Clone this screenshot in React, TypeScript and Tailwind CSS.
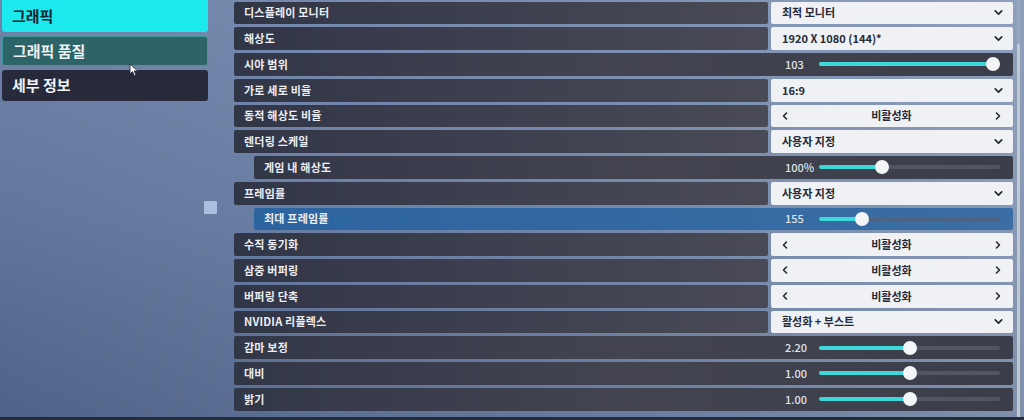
import React from 'react';
import { ChevronDown, ChevronLeft, ChevronRight } from 'lucide-react';

type Setting = {
    label: string;
    kind: 'select' | 'toggle' | 'slider';
    value: string;
    pct?: number;
    indent?: boolean;
    active?: boolean;
};

const settings: Setting[] = [
    { label: '디스플레이 모니터', kind: 'select', value: '최적 모니터' },
    { label: '해상도', kind: 'select', value: '1920 X 1080 (144)*' },
    { label: '시야 범위', kind: 'slider', value: '103', pct: 96 },
    { label: '가로 세로 비율', kind: 'select', value: '16:9' },
    { label: '동적 해상도 비율', kind: 'toggle', value: '비활성화' },
    { label: '렌더링 스케일', kind: 'select', value: '사용자 지정' },
    { label: '게임 내 해상도', kind: 'slider', value: '100%', pct: 35, indent: true },
    { label: '프레임률', kind: 'select', value: '사용자 지정' },
    { label: '최대 프레임률', kind: 'slider', value: '155', pct: 24, indent: true, active: true },
    { label: '수직 동기화', kind: 'toggle', value: '비활성화' },
    { label: '삼중 버퍼링', kind: 'toggle', value: '비활성화' },
    { label: '버퍼링 단축', kind: 'toggle', value: '비활성화' },
    { label: 'NVIDIA 리플렉스', kind: 'select', value: '활성화 + 부스트' },
    { label: '감마 보정', kind: 'slider', value: '2.20', pct: 50 },
    { label: '대비', kind: 'slider', value: '1.00', pct: 50 },
    { label: '밝기', kind: 'slider', value: '1.00', pct: 50 },
];

const font = { fontFamily: '"Noto Sans CJK KR", "Noto Sans", sans-serif' };

const SettingRow = ({ s }: { s: Setting }) => {
    const labelText = (
        <span className="text-[11px] leading-none font-bold text-[#eceef3] tracking-[0.2px]">{s.label}</span>
    );

    if (s.kind === 'slider') {
        return (
            <div
                className={`h-[22.75px] flex items-center rounded-[2px] ${s.indent ? 'ml-[20px]' : ''} ${
                    s.active
                        ? 'bg-gradient-to-r from-[#2c64a0] to-[#3a6ea4]'
                        : 'bg-gradient-to-r from-[#323748] via-[#434450] to-[#3b3d4a]'
                }`}
            >
                <div className="flex-1 flex items-center pl-[10px]">{labelText}</div>
                <div className="w-[242px] flex items-center">
                    <span className="w-[48px] pl-[14px] text-[11px] leading-none font-medium text-[#dfe3ea]">{s.value}</span>
                    <div className="relative w-[181px] h-[4px] rounded-full bg-[#5b5f6e]/70">
                        <div className="absolute left-0 top-0 h-full rounded-full bg-[#3ed8da]" style={{ width: `${s.pct}%` }} />
                        <div
                            className="absolute top-1/2 w-[14px] h-[14px] -translate-x-1/2 -translate-y-1/2 rounded-full bg-[#f4f5f7]"
                            style={{ left: `${s.pct}%` }}
                        />
                    </div>
                </div>
            </div>
        );
    }

    return (
        <div className={`h-[22.75px] flex ${s.indent ? 'ml-[20px]' : ''}`}>
            <div className="flex-1 flex items-center pl-[10px] rounded-[2px] bg-gradient-to-r from-[#313647] to-[#4a4a56]">
                {labelText}
            </div>
            <div className="w-[242px] ml-[3px] flex items-center rounded-[2px] bg-[#eff1f4] text-[#252a36]">
                {s.kind === 'select' ? (
                    <>
                        <span className="flex-1 pl-[11px] text-[11px] leading-none font-bold">{s.value}</span>
                        <ChevronDown size={13} strokeWidth={3.2} className="mr-[8px]" />
                    </>
                ) : (
                    <>
                        <ChevronLeft size={12} strokeWidth={3.2} className="ml-[8px]" />
                        <span className="flex-1 text-center text-[11px] leading-none font-bold">{s.value}</span>
                        <ChevronRight size={12} strokeWidth={3.2} className="mr-[9px]" />
                    </>
                )}
            </div>
        </div>
    );
};

const App = () => {
    return (
        <div
            className="relative w-[1024px] h-[420px] overflow-hidden flex bg-gradient-to-b from-[#7185a9] via-[#62779c] to-[#4f6287]"
            style={font}
        >
            {/* lighter haze behind the settings list */}
            <div className="absolute inset-0 bg-gradient-to-r from-transparent via-[#8a9ec0]/35 to-[#a6b5ca]/55 pointer-events-none" />

            {/* Left menu */}
            <div className="relative w-[234px] pl-[2px] flex flex-col gap-[4px]">
                <div className="w-[206px] h-[32px] flex items-center pl-[10px] rounded-b-[3px] bg-[#1ce9ee]">
                    <span className="text-[15px] font-bold text-[#142030]">그래픽</span>
                </div>
                <div className="w-[206px] h-[30px] flex items-center pl-[10px] rounded-[3px] bg-[#2c6468] border border-[#3f9aa0]">
                    <span className="text-[15px] font-bold text-[#eef2f4]">그래픽 품질</span>
                </div>
                <div className="w-[206px] h-[31px] flex items-center pl-[10px] rounded-[3px] bg-[#262a3a]">
                    <span className="text-[15px] font-bold text-[#f2f4f7]">세부 정보</span>
                </div>

                {/* mouse cursor */}
                <svg className="absolute left-[129px] top-[63px]" width="10" height="14" viewBox="0 0 10 14">
                    <path d="M1 1 L1 11 L3.5 8.6 L5.4 12.8 L7 12 L5.2 8 L8.6 8 Z" fill="#ffffff" stroke="#1b2230" strokeWidth="0.8" />
                </svg>

                {/* small square decoration */}
                <div className="absolute left-[204px] top-[201px] w-[13px] h-[13px] rounded-[1px] bg-[#aac0de]" />
            </div>

            {/* Settings list */}
            <div className="relative flex-1 flex flex-col gap-[3px] pt-[1.5px] pr-[11px]">
                {settings.map((s) => (
                    <SettingRow key={s.label} s={s} />
                ))}
            </div>

            {/* scrollbar */}
            <div className="absolute right-[4px] top-[44px] bottom-0 w-[3px] bg-[#c2c8d2]" />
            <div className="absolute right-[4px] top-0 h-[44px] w-[3px] bg-[#9aa8bd]" />

            {/* bottom dark edge */}
            <div className="absolute left-0 right-0 bottom-0 h-[3px] bg-[#262b38]" />
        </div>
    );
};

export default App;
